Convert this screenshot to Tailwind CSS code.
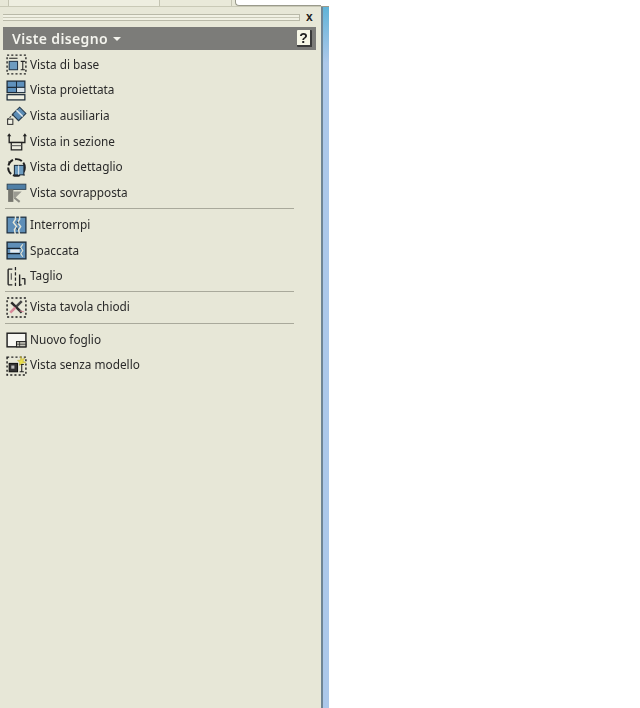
<!DOCTYPE html>
<html><head><meta charset="utf-8">
<script src="https://cdn.jsdelivr.net/npm/@tailwindcss/browser@4"></script>
</head>
<body class="bg-white">
<div class="flex h-[708px] w-[640px] overflow-hidden bg-white font-['Noto_Sans',sans-serif]">
  <div class="relative flex h-full w-[321px] flex-col bg-[#e7e7d7]">
    <!-- top tab strip -->
    <div class="flex h-[7px] border-b border-[#c9c9b6]">
      <div class="ml-[8px] h-full w-[152px] border-x border-[#c4c4b2] bg-[#eeeee0]"></div>
      <div class="h-full w-[72px] border-r border-[#c4c4b2] bg-[#e9e9d9]"></div>
      <div class="ml-[3px] h-[6px] flex-1 rounded-bl-sm border-b border-l border-[#9a9a8c] bg-white"></div>
    </div>
    <!-- grip -->
    <div class="flex h-[20px] items-center pl-[3px]">
      <div class="flex h-[7px] w-[297px] flex-col justify-between border-y border-r border-[#b9b9a8] bg-[#f1f1e4]">
        <div class="mt-[2px] h-px bg-[#c9c9b8]"></div>
      </div>
      <span class="ml-[6px] text-[12px] leading-none font-bold text-[#222] font-['Liberation_Sans',sans-serif]">x</span>
    </div>
    <!-- header -->
    <div class="ml-[3px] flex h-[23px] w-[313px] items-center justify-between bg-[#7c7c79] pl-[9px] pr-[4px]">
      <div class="flex items-center gap-[5px] blur-[0.35px]">
        <span class="text-[14px] leading-none font-semibold tracking-[0.35px] text-[#f4f4ee]">Viste disegno</span>
        <span class="h-0 w-0 border-x-[4px] border-t-[4px] border-x-transparent border-t-[#f4f4ee]"></span>
      </div>
      <div class="relative flex h-[17px] w-[15px] items-center justify-center rounded-[1px] border-r-2 border-b-2 border-[#3a3a3a] bg-[#f6f6e6] text-[14px] leading-none font-bold text-[#222] blur-[0.3px] font-['Liberation_Sans',sans-serif]">?</div>
    </div>
    <!-- menu -->
    <div class="mt-[2px] flex flex-col text-[11.8px] leading-none text-[#2a2a2a]">
      <div class="flex h-[25.6px] items-center gap-[2px] pl-[5px] blur-[0.35px]">
        <svg width="23" height="23" viewBox="0 0 22 22" fill="none"><rect x="2" y="2" width="18" height="18" stroke="#222" stroke-width="1.3" stroke-dasharray="2 2"/><rect x="4" y="8" width="8" height="8" fill="#6d9cc0" stroke="#22374a"/><path d="M15 8h4M17 8v8M15 16h4M4 5h8" stroke="#222"/></svg>
        <span>Vista di base</span>
      </div>
      <div class="flex h-[25.6px] items-center gap-[2px] pl-[5px] blur-[0.35px]">
        <svg width="23" height="23" viewBox="0 0 22 22" fill="none"><rect x="2" y="2" width="17" height="11" fill="#5f91bd" stroke="#1d2c3a" stroke-width="1.2"/><path d="M11 2v11M2 8h17" stroke="#1d2c3a"/><rect x="11.500" y="8.500" width="7" height="4" fill="#dbe4ea"/><rect x="2" y="15" width="17" height="5" fill="#efefe2" stroke="#1d2c3a" stroke-width="1.2"/></svg>
        <span>Vista proiettata</span>
      </div>
      <div class="flex h-[25.6px] items-center gap-[2px] pl-[5px] blur-[0.35px]">
        <svg width="23" height="23" viewBox="0 0 22 22" fill="none"><path d="M7 10l7-7 6 6-7 7z" fill="#5c8cb5" stroke="#24384a"/><path d="M11 6l6 6" stroke="#dfe7ec" stroke-width="1.5"/><path d="M2 15l6-5" stroke="#333" stroke-dasharray="2 1"/><rect x="2.500" y="14.500" width="5" height="5" fill="#f0f0e4" stroke="#333"/></svg>
        <span>Vista ausiliaria</span>
      </div>
      <div class="flex h-[25.6px] items-center gap-[2px] pl-[5px] blur-[0.35px]">
        <svg width="23" height="23" viewBox="0 0 22 22" fill="none"><path d="M4 5v7h15V5" stroke="#222" stroke-width="1.3"/><path d="M4 3l-2 3h4zM19 3l-2 3h4z" fill="#222"/><rect x="6" y="12" width="10" height="7" fill="#ecece0" stroke="#222" stroke-width="1.2"/><path d="M6 15h10" stroke="#555"/></svg>
        <span>Vista in sezione</span>
      </div>
      <div class="flex h-[25.6px] items-center gap-[2px] pl-[5px] blur-[0.35px]">
        <svg width="23" height="23" viewBox="0 0 22 22" fill="none"><circle cx="11" cy="11" r="8" stroke="#1f1f1f" stroke-width="1.8" stroke-dasharray="7 2"/><path d="M3 5l3 1-2 2zM18 16l1 3-3-1z" fill="#222"/><rect x="9" y="9" width="9" height="9" fill="#6d9cc0" stroke="#203040"/><path d="M13 9v9" stroke="#dfe7ec"/></svg>
        <span>Vista di dettaglio</span>
      </div>
      <div class="flex h-[25.6px] items-center gap-[2px] pl-[5px] blur-[0.35px]">
        <svg width="23" height="23" viewBox="0 0 22 22" fill="none"><rect x="2" y="3" width="18" height="5" fill="#4f7fa6" stroke="#26394a" stroke-width=".8"/><path d="M3 8h5v12H3z" fill="#77776f"/><path d="M8 10l8 0-6 6-2 0z" fill="#9b9b92"/><path d="M9 16l5 4" stroke="#8c8c84" stroke-width="2"/></svg>
        <span>Vista sovrapposta</span>
      </div>
      <div class="mt-[2px] mb-[3.5px] ml-[5px] h-px w-[289px] bg-[#a9a99b]"></div>
      <div class="flex h-[25.6px] items-center gap-[2px] pl-[5px] blur-[0.35px]">
        <svg width="23" height="23" viewBox="0 0 22 22" fill="none"><rect x="2" y="4" width="18" height="15" fill="#5f8fb8" stroke="#1f3040" stroke-width="1.2"/><path d="M10 1v5l-2 3 3 4-2 3 1 5M14 1v5l-2 3 3 4-2 3 1 5" stroke="#e7e7d7" stroke-width="1.4"/><path d="M11.500 8l1 2M11 14l1 2" stroke="#1f3040"/></svg>
        <span>Interrompi</span>
      </div>
      <div class="flex h-[25.6px] items-center gap-[2px] pl-[5px] blur-[0.35px]">
        <svg width="23" height="23" viewBox="0 0 22 22" fill="none"><rect x="2" y="3" width="18" height="16" fill="#5f8fb8" stroke="#1d2c3a" stroke-width="1.3"/><path d="M2 9h13M2 14h13" stroke="#16222e" stroke-width="1.2"/><rect x="5" y="10" width="9" height="3" fill="#e6ebee"/><path d="M17 5l-2 3 2 3-2 3 2 3" stroke="#e7e7d7"/></svg>
        <span>Spaccata</span>
      </div>
      <div class="flex h-[25.6px] items-center gap-[2px] pl-[5px] blur-[0.35px]">
        <svg width="23" height="23" viewBox="0 0 22 22" fill="none"><path d="M3 4h4M3 19h4M3 4v15" stroke="#222" stroke-width="1.3"/><path d="M10 2v3M10 7v3M10 12v3M10 17v3" stroke="#222" stroke-width="1.2"/><path d="M6 8v6" stroke="#444"/><path d="M14 9v11M19 13v6M14 19h2M16 13h3" stroke="#222" stroke-width="1.3"/></svg>
        <span>Taglio</span>
      </div>
      <div class="mt-[2.5px] mb-[2px] ml-[5px] h-px w-[289px] bg-[#a9a99b]"></div>
      <div class="flex h-[25.6px] items-center gap-[2px] pl-[5px] blur-[0.35px]">
        <svg width="23" height="23" viewBox="0 0 22 22" fill="none"><rect x="2" y="2" width="18" height="18" stroke="#222" stroke-width="1.4" stroke-dasharray="2 2"/><path d="M6 6l10 10" stroke="#2a2a2a" stroke-width="2.4"/><path d="M16 5l-5 5" stroke="#444" stroke-width="2.4"/><path d="M5 16l5-5" stroke="#d98a9a" stroke-width="2.4"/><path d="M14 14l4 1" stroke="#d98a9a"/></svg>
        <span>Vista tavola chiodi</span>
      </div>
      <div class="mt-[3px] mb-[3px] ml-[5px] h-px w-[289px] bg-[#a9a99b]"></div>
      <div class="flex h-[25.6px] items-center gap-[2px] pl-[5px] blur-[0.35px]">
        <svg width="23" height="23" viewBox="0 0 22 22" fill="none"><rect x="2" y="5" width="18" height="13" fill="#f7f7f2" stroke="#222" stroke-width="1.4"/><rect x="11" y="13" width="9" height="5" fill="#c9c9bd" stroke="#222"/><path d="M14 13v5M11 15.500h9" stroke="#222" stroke-width=".7"/></svg>
        <span>Nuovo foglio</span>
      </div>
      <div class="flex h-[25.6px] items-center gap-[2px] pl-[5px] blur-[0.35px]">
        <svg width="23" height="23" viewBox="0 0 22 22" fill="none"><rect x="2" y="3" width="18" height="17" stroke="#222" stroke-width="1.4" stroke-dasharray="2 2"/><rect x="4" y="9" width="8" height="8" fill="#333" stroke="#111"/><path d="M6 11h3v3H6z" fill="#bbb"/><path d="M14 10h4M16 10v7M14 17h4" stroke="#222"/><path d="M15 2l1 3 3-1-2 3 3 1-4 1-2 2 0-3-2-2 3 0z" fill="#e9df4c" stroke="#b9a92c" stroke-width=".5"/></svg>
        <span>Vista senza modello</span>
      </div>
    </div>
  </div>
  <div class="flex h-full w-[8px] flex-col">
    <div class="h-[7px] border-b border-[#9a9a8c] bg-white"></div>
    <div class="flex flex-1">
      <div class="h-full w-[2px] bg-[#6f8594]"></div>
      <div class="h-full w-[6px] bg-gradient-to-b from-[#5fb3d8] to-[#acc8ea] to-[8%]"></div>
    </div>
  </div>
</div>
</body></html>
